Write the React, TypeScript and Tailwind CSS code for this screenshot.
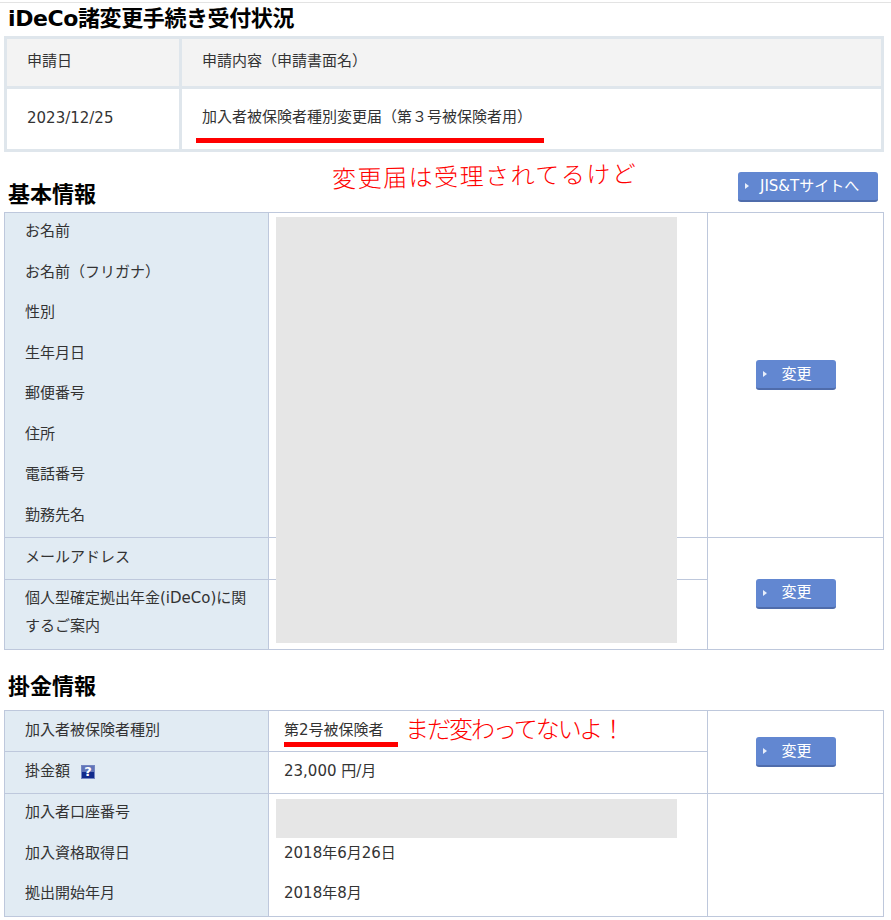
import type { ReactNode } from "react";

const basicLabels = ["お名前", "お名前（フリガナ）", "性別", "生年月日", "郵便番号", "住所", "電話番号", "勤務先名"];

function Btn({ label, wide }: { label: string; wide?: boolean }) {
  return (
    <a
      className={
        "flex items-center h-[30px] rounded-[3px] bg-[#6287d1] border-b-2 border-[#4f6cab] text-white text-[15px] " +
        (wide ? "w-[140px] pl-[7px]" : "w-[80px] pl-[7px]")
      }
    >
      <span className="w-0 h-0 border-y-[3px] border-y-transparent border-l-[4px] border-l-[#e8eefa]" />
      <span className={wide ? "ml-[11px]" : "ml-[15px]"}>{label}</span>
    </a>
  );
}

function Label({ children, className = "" }: { children: ReactNode; className?: string }) {
  return <td className={"border border-[#bec8dc] bg-[#e1ebf3] pl-[20px] pr-2 align-middle " + className}>{children}</td>;
}

function Cell({ children, className = "", rowSpan }: { children?: ReactNode; className?: string; rowSpan?: number }) {
  return (
    <td rowSpan={rowSpan} className={"border border-[#bec8dc] pl-[15px] align-middle " + className}>
      {children}
    </td>
  );
}

function Heading({ children, className = "" }: { children: ReactNode; className?: string }) {
  return <h2 className={"text-[22px] leading-[28px] font-bold text-black pl-[8px] " + className}>{children}</h2>;
}

export default function App() {
  return (
    <div className="relative w-[891px] h-[920px] overflow-hidden bg-white text-[#333] text-[15px] font-['DejaVu_Sans','Noto_Sans_CJK_JP',sans-serif]">
      <div className="pt-[2px]">
        <div className="h-[1px] bg-[#e3e3e3]" />
      </div>

      <Heading className="mt-[2px] h-[28px] tracking-[-0.4px]">iDeCo諸変更手続き受付状況</Heading>

      <div className="ml-[4px] w-[880px] mt-[3px]">
        <table className="w-full table-fixed border-collapse border-[3px] border-[#dfe6ec]">
          <colgroup>
            <col className="w-[175px]" />
            <col />
          </colgroup>
          <tbody>
            <tr className="h-[50px] bg-[#f3f3f3]">
              <td className="border-[3px] border-[#dfe6ec] pl-[20px] pb-[2px]">申請日</td>
              <td className="border-[3px] border-[#dfe6ec] pl-[20px] pb-[2px]">申請内容（申請書面名）</td>
            </tr>
            <tr className="h-[63px]">
              <td className="border-[3px] border-[#dfe6ec] pl-[20px] pb-[2px]">2023/12/25</td>
              <td className="border-[3px] border-[#dfe6ec] pl-[20px] pb-[3px]">加入者被保険者種別変更届（第３号被保険者用）</td>
            </tr>
          </tbody>
        </table>
      </div>

      <div className="flex items-end justify-between h-[60px] pr-[13px]">
        <Heading className="pb-[3px]">基本情報</Heading>
        <div className="mb-[10px]">
          <Btn label="JIS&Tサイトへ" wide />
        </div>
      </div>

      <div className="ml-[4px] w-[880px]">
        <table className="w-full table-fixed border-collapse">
          <colgroup>
            <col className="w-[264px]" />
            <col className="w-[439px]" />
            <col />
          </colgroup>
          <tbody>
            <tr className="h-[325px]">
              <Label>
                {basicLabels.map((l) => (
                  <div key={l} className="h-[40.5px] leading-[36px]">
                    {l}
                  </div>
                ))}
              </Label>
              <Cell />
              <Cell>
                <div className="flex justify-center pr-[15px]">
                  <Btn label="変更" />
                </div>
              </Cell>
            </tr>
            <tr className="h-[42px]">
              <Label className="pb-[2px]">メールアドレス</Label>
              <Cell />
              <Cell rowSpan={2}>
                <div className="flex justify-center pr-[15px]">
                  <Btn label="変更" />
                </div>
              </Cell>
            </tr>
            <tr className="h-[70px]">
              <Label className="leading-[28px] pb-[6px]">
                個人型確定拠出年金(iDeCo)に関
                <br />
                するご案内
              </Label>
              <Cell />
            </tr>
          </tbody>
        </table>
      </div>

      <Heading className="mt-[23px] h-[37px]">掛金情報</Heading>

      <div className="ml-[4px] w-[880px]">
        <table className="w-full table-fixed border-collapse">
          <colgroup>
            <col className="w-[264px]" />
            <col className="w-[439px]" />
            <col />
          </colgroup>
          <tbody>
            <tr className="h-[41px]">
              <Label className="pb-[2px]">加入者被保険者種別</Label>
              <Cell className="pb-[2px]">第2号被保険者</Cell>
              <Cell rowSpan={2}>
                <div className="flex justify-center pr-[15px]">
                  <Btn label="変更" />
                </div>
              </Cell>
            </tr>
            <tr className="h-[42px]">
              <Label className="pb-[2px]">
                <span className="flex items-center gap-[11px]">
                  掛金額
                  <span className="flex items-center justify-center w-[14px] h-[14px] border border-[#7486c2] bg-[linear-gradient(#6073b8_50%,#112a8c_50%)] text-white text-[13px] font-bold leading-none">
                    ?
                  </span>
                </span>
              </Label>
              <Cell className="pb-[2px]">23,000 円/月</Cell>
            </tr>
            <tr className="h-[122px]">
              <Label>
                <div className="h-[40.5px] leading-[36px]">加入者口座番号</div>
                <div className="h-[40.5px] leading-[36px]">加入資格取得日</div>
                <div className="h-[40.5px] leading-[36px]">拠出開始年月</div>
              </Label>
              <Cell>
                <div className="h-[40.5px]" />
                <div className="h-[40.5px] leading-[36px]">2018年6月26日</div>
                <div className="h-[40.5px] leading-[36px]">2018年8月</div>
              </Cell>
              <Cell />
            </tr>
          </tbody>
        </table>
      </div>

      {/* 黒塗りと手書きの注釈 */}
      <div className="absolute left-[276px] top-[217px] w-[401px] h-[426px] bg-[#e6e6e6]" />
      <div className="absolute left-[276px] top-[799px] w-[401px] h-[39px] bg-[#e6e6e6]" />
      <div className="absolute left-[196px] top-[138px] w-[348px] h-[5px] bg-[#ff0000]" />
      <div className="absolute left-[284px] top-[742px] w-[114px] h-[5px] bg-[#ff0000]" />
      <div className="absolute left-[332px] top-[160px] text-[24px] leading-[34px] font-light tracking-[1.5px] text-[#ff0000] -rotate-1">
        変更届は受理されてるけど
      </div>
      <div className="absolute left-[405px] top-[713px] text-[24px] leading-[34px] font-light tracking-[-2px] text-[#ff0000]">
        まだ変わってないよ！
      </div>
    </div>
  );
}
